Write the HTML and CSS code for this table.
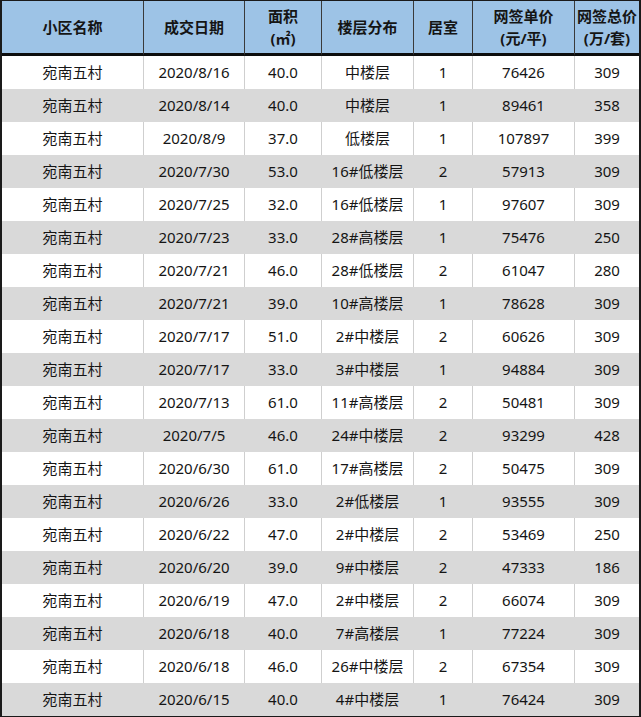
FILE: index.html
```html
<!DOCTYPE html>
<html lang="zh">
<head>
<meta charset="utf-8">
<title>宛南五村 成交记录</title>
<link rel="stylesheet" href="styles.css">
</head>
<body>
<div class="sheet">
<table class="grid">
<colgroup>
<col class="c1"><col class="c2"><col class="c3"><col class="c4"><col class="c5"><col class="c6"><col class="c7">
</colgroup>
<thead>
<tr>
<th>小区名称</th><th>成交日期</th><th>面积<br>(㎡)</th><th>楼层分布</th><th>居室</th><th>网签单价<br>(元/平)</th><th>网签总价<br>(万/套)</th>
</tr>
</thead>
<tbody>
<tr><td>宛南五村</td><td>2020/8/16</td><td>40.0</td><td>中楼层</td><td>1</td><td>76426</td><td>309</td></tr>
<tr><td>宛南五村</td><td>2020/8/14</td><td>40.0</td><td>中楼层</td><td>1</td><td>89461</td><td>358</td></tr>
<tr><td>宛南五村</td><td>2020/8/9</td><td>37.0</td><td>低楼层</td><td>1</td><td>107897</td><td>399</td></tr>
<tr><td>宛南五村</td><td>2020/7/30</td><td>53.0</td><td>16#低楼层</td><td>2</td><td>57913</td><td>309</td></tr>
<tr><td>宛南五村</td><td>2020/7/25</td><td>32.0</td><td>16#低楼层</td><td>1</td><td>97607</td><td>309</td></tr>
<tr><td>宛南五村</td><td>2020/7/23</td><td>33.0</td><td>28#高楼层</td><td>1</td><td>75476</td><td>250</td></tr>
<tr><td>宛南五村</td><td>2020/7/21</td><td>46.0</td><td>28#低楼层</td><td>2</td><td>61047</td><td>280</td></tr>
<tr><td>宛南五村</td><td>2020/7/21</td><td>39.0</td><td>10#高楼层</td><td>1</td><td>78628</td><td>309</td></tr>
<tr><td>宛南五村</td><td>2020/7/17</td><td>51.0</td><td>2#中楼层</td><td>2</td><td>60626</td><td>309</td></tr>
<tr><td>宛南五村</td><td>2020/7/17</td><td>33.0</td><td>3#中楼层</td><td>1</td><td>94884</td><td>309</td></tr>
<tr><td>宛南五村</td><td>2020/7/13</td><td>61.0</td><td>11#高楼层</td><td>2</td><td>50481</td><td>309</td></tr>
<tr><td>宛南五村</td><td>2020/7/5</td><td>46.0</td><td>24#中楼层</td><td>2</td><td>93299</td><td>428</td></tr>
<tr><td>宛南五村</td><td>2020/6/30</td><td>61.0</td><td>17#高楼层</td><td>2</td><td>50475</td><td>309</td></tr>
<tr><td>宛南五村</td><td>2020/6/26</td><td>33.0</td><td>2#低楼层</td><td>1</td><td>93555</td><td>309</td></tr>
<tr><td>宛南五村</td><td>2020/6/22</td><td>47.0</td><td>2#中楼层</td><td>2</td><td>53469</td><td>250</td></tr>
<tr><td>宛南五村</td><td>2020/6/20</td><td>39.0</td><td>9#中楼层</td><td>2</td><td>47333</td><td>186</td></tr>
<tr><td>宛南五村</td><td>2020/6/19</td><td>47.0</td><td>2#中楼层</td><td>2</td><td>66074</td><td>309</td></tr>
<tr><td>宛南五村</td><td>2020/6/18</td><td>40.0</td><td>7#高楼层</td><td>1</td><td>77224</td><td>309</td></tr>
<tr><td>宛南五村</td><td>2020/6/18</td><td>46.0</td><td>26#中楼层</td><td>2</td><td>67354</td><td>309</td></tr>
<tr><td>宛南五村</td><td>2020/6/15</td><td>40.0</td><td>4#中楼层</td><td>1</td><td>76424</td><td>309</td></tr>
</tbody>
</table>
</div>
</body>
</html>
```
FILE: styles.css
```css
html, body {
  margin: 0;
  padding: 0;
  background: #ffffff;
}

.sheet {
  width: 641px;
  box-sizing: border-box;
  border-left: 2px solid #1a1a1a;
  border-right: 2px solid #1a1a1a;
  border-top: 1px solid #1a1a1a;
  border-bottom: 1px solid #1a1a1a;
  font-family: "Noto Sans", "Noto Sans CJK SC", sans-serif;
  color: #151515;
}

.grid {
  width: 637px;
  table-layout: fixed;
  border-collapse: separate;
  border-spacing: 0;
}

.c1 { width: 142px; }
.c2 { width: 101px; }
.c3 { width: 77px; }
.c4 { width: 92px; }
.c5 { width: 59px; }
.c6 { width: 102px; }
.c7 { width: 64px; }

.grid th {
  height: 55px;
  padding: 0;
  background: #9dc3e6;
  font-size: 15px;
  font-weight: 700;
  line-height: 22px;
  text-align: center;
  vertical-align: middle;
  border-right: 1px solid #3a3a3a;
  border-bottom: 3px solid #0d0d0d;
  box-sizing: border-box;
}

.grid th:last-child,
.grid td:last-child {
  border-right: none;
}

.grid td {
  height: 33px;
  padding: 0;
  font-size: 15px;
  line-height: 33px;
  text-align: center;
  vertical-align: middle;
  border-right: 1px solid #cfcfcf;
  white-space: nowrap;
  overflow: hidden;
}

.grid tbody tr:nth-child(even) td {
  background: #d9d9d9;
  border-right-color: #d9d9d9;
}
```
